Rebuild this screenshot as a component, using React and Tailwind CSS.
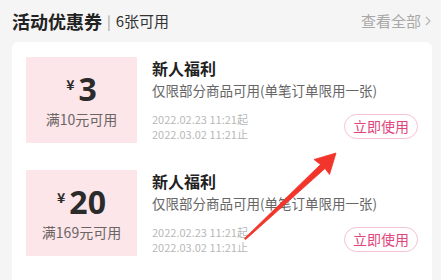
import React from "react";

const font = { fontFamily: '"Noto Sans CJK SC", "Noto Sans", sans-serif' };

function Coupon({ amount, cond }) {
  return (
    <div className="flex h-[86px]">
      <div className="w-[111px] shrink-0 bg-[#fde6e9] flex flex-col items-center justify-center">
        <div className="flex items-start leading-none text-[#2b2b2b]">
          <span className="text-[14px] font-bold mt-[3px] mr-[4px]">¥</span>
          <span className="text-[32px] font-bold leading-[30px]" style={{ fontFamily: '"Noto Sans", sans-serif' }}>{amount}</span>
        </div>
        <div className="text-[14px] text-[#6a6464] mt-[8px] leading-none">{cond}</div>
      </div>
      <div className="flex-1 pl-[15px] pr-[14px] flex flex-col">
        <div className="text-[16px] font-bold text-[#222] leading-none mt-[3px]">新人福利</div>
        <div className="text-[13.5px] text-[#666] leading-none mt-[8px] whitespace-nowrap">仅限部分商品可用(单笔订单限用一张)</div>
        <div className="flex items-end justify-between mt-[14px]">
          <div className="text-[11px] text-[#b8b8b8] leading-[15px]">
            <div>2022.02.23 11:21起</div>
            <div>2022.03.02 11:21止</div>
          </div>
          <div className="h-[25px] w-[74px] rounded-full border border-[#f6c3d2] text-[#e2457c] text-[14px] flex items-center justify-center mb-[3px]">
            立即使用
          </div>
        </div>
      </div>
    </div>
  );
}

export default function App() {
  return (
    <div className="relative w-[441px] h-[280px] bg-[#f5f5f5] overflow-hidden" style={font}>
      <div className="h-[42px] flex items-center justify-between pl-[12px] pr-[9px]">
        <div className="flex items-center">
          <span className="text-[18px] font-bold text-[#222]">活动优惠券</span>
          <span className="text-[14px] text-[#999] mx-[5px]">|</span>
          <span className="text-[15px] text-[#333]">6张可用</span>
        </div>
        <div className="flex items-center text-[15px] text-[#a8a8a8]">
          查看全部
          <svg width="8" height="12" viewBox="0 0 8 12" className="ml-[3px]">
            <path d="M2 2 L6 6 L2 10" fill="none" stroke="#b5b5b5" strokeWidth="1.2" />
          </svg>
        </div>
      </div>
      <div className="ml-[12px] w-[420px] h-[250px] bg-white rounded-[6px] pt-[15px] pl-[14px] flex flex-col gap-[27px]">
        <Coupon amount="3" cond="满10元可用" />
        <Coupon amount="20" cond="满169元可用" />
      </div>
      <svg className="absolute left-0 top-0 pointer-events-none" width="441" height="280" viewBox="0 0 441 280">
        <path
          d="M244.4 238.6 L320.5 164.5 L314 159.5 L336 153 L329.5 174.5 L325 168.5 L245.6 239.6 Z"
          fill="#f2352b"
          stroke="#f2352b"
          strokeWidth="0.8"
          strokeLinejoin="round"
        />
      </svg>
    </div>
  );
}
